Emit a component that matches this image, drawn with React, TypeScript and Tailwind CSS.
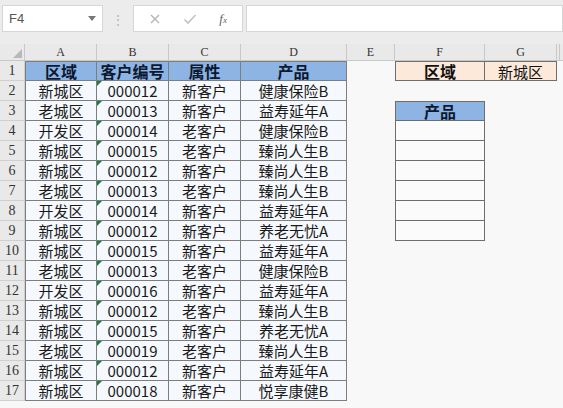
import React from 'react';

const rows: string[][] = [
  ['新城区', '000012', '新客户', '健康保险B'],
  ['老城区', '000013', '新客户', '益寿延年A'],
  ['开发区', '000014', '老客户', '健康保险B'],
  ['新城区', '000015', '老客户', '臻尚人生B'],
  ['新城区', '000012', '新客户', '臻尚人生B'],
  ['老城区', '000013', '老客户', '臻尚人生B'],
  ['开发区', '000014', '新客户', '益寿延年A'],
  ['新城区', '000012', '新客户', '养老无忧A'],
  ['新城区', '000015', '新客户', '益寿延年A'],
  ['老城区', '000013', '老客户', '健康保险B'],
  ['开发区', '000016', '新客户', '益寿延年A'],
  ['新城区', '000012', '老客户', '臻尚人生B'],
  ['新城区', '000015', '新客户', '养老无忧A'],
  ['老城区', '000019', '老客户', '臻尚人生B'],
  ['新城区', '000012', '新客户', '益寿延年A'],
  ['新城区', '000018', '新客户', '悦享康健B'],
];

const cols = [
  { key: 'A', w: 'w-[72px]' },
  { key: 'B', w: 'w-[72px]' },
  { key: 'C', w: 'w-[72px]' },
  { key: 'D', w: 'w-[106px]' },
  { key: 'E', w: 'w-[48px]' },
  { key: 'F', w: 'w-[90px]' },
  { key: 'G', w: 'w-[72px]' },
];

const cjk = { fontFamily: '"Noto Sans CJK SC", "Noto Sans", sans-serif' };
const serif = { fontFamily: '"Liberation Serif", "DejaVu Serif", serif' };

const GreenFlag = () => (
  <span className="absolute left-0 top-0 w-0 h-0 border-t-[5px] border-r-[5px] border-t-[#1f7a45] border-r-transparent" />
);

const App: React.FC = () => {
  return (
    <div className="w-[563px] h-[408px] overflow-hidden bg-[#f8f8f8] text-[#111]" style={cjk}>
      {/* formula bar */}
      <div className="h-[33px] bg-[#ececec] pt-[5px] flex">
        <div className="ml-[2px] w-[101px] h-[27px] bg-white border border-[#d6d6d6] flex items-center justify-between px-[6px]">
          <span className="text-[13px] text-[#555]" style={{ fontFamily: '"Liberation Sans", Arial, sans-serif' }}>F4</span>
          <span className="w-0 h-0 border-l-[4px] border-r-[4px] border-t-[5px] border-l-transparent border-r-transparent border-t-[#777]" />
        </div>
        <div className="w-[30px] flex items-center justify-center text-[#b0b0b0] text-[12px] leading-none">⋮</div>
        <div className="w-[110px] h-[27px] bg-white border border-[#d6d6d6] flex items-center justify-around px-[4px] text-[#b3b3b3]">
          <svg width="12" height="12" viewBox="0 0 12 12"><path d="M2 2L10 10M10 2L2 10" stroke="#b3b3b3" strokeWidth="1.3" /></svg>
          <svg width="14" height="12" viewBox="0 0 14 12"><path d="M1.5 6.5L5 10L12.5 2" stroke="#c2c2c2" strokeWidth="1.6" fill="none" /></svg>
          <span className="italic text-[13px] text-[#666]" style={serif}>f<span className="text-[9px]">x</span></span>
        </div>
        <div className="w-[3px]" />
        <div className="flex-1 h-[27px] bg-white border border-[#d6d6d6]" />
      </div>
      <div className="h-[11px] bg-[#ececec]" />

      {/* column headers */}
      <div className="flex h-[17px] bg-[#e9e9e9] border-b border-[#c8c8c8]">
        <div className="w-[25px] border-r border-[#c8c8c8] relative">
          <span className="absolute right-[2px] bottom-[2px] w-0 h-0 border-l-[9px] border-t-[9px] border-l-transparent border-t-transparent border-b-0 border-r-0" style={{ borderBottom: '9px solid #b8b8b8', borderLeft: '9px solid transparent', borderTop: 0 }} />
        </div>
        {cols.map(c => (
          <div key={c.key} className={`${c.w} box-border border-r border-[#c8c8c8] flex items-center justify-center text-[12px] text-[#333] leading-none`} style={serif}>
            {c.key}
          </div>
        ))}
        <div className="w-[3px] border-r border-[#c8c8c8]" />
      </div>

      {/* rows */}
      {Array.from({ length: 17 }).map((_, i) => {
        const r = i + 1;
        const data = r >= 2 ? rows[r - 2] : null;
        return (
          <div key={r} className="flex h-[20px]">
            <div className="w-[25px] box-border bg-[#e9e9e9] border-r border-b border-[#cfcfcf] flex items-center justify-center text-[14px] text-[#333] leading-none" style={serif}>
              {r}
            </div>
            {[0, 1, 2, 3].map(ci => (
              <div
                key={ci}
                className={`${cols[ci].w} box-border relative border-r border-b border-[#7d7d7d] flex items-center justify-center leading-none ${ci === 0 ? 'border-l' : ''} ${r === 1 ? 'border-t bg-[#8db4e2] font-bold text-[16px] text-[#0c1830]' : 'bg-[#f5f8fc] text-[15px] text-[#1a1a1a]'}`}
              >
                {r === 1 ? ['区域', '客户编号', '属性', '产品'][ci] : data![ci]}
                {r > 1 && ci === 1 && <GreenFlag />}
              </div>
            ))}
            <div className="w-[48px]" />
            {r === 1 ? (
              <>
                <div className="w-[90px] box-border border border-[#6e6e6e] bg-[#fde9d9] flex items-center justify-center font-bold text-[16px] leading-none">区域</div>
                <div className="w-[72px] box-border border-t border-r border-b border-[#6e6e6e] bg-[#fde9d9] flex items-center justify-center text-[15px] leading-none">新城区</div>
              </>
            ) : r === 3 ? (
              <div className="w-[90px] box-border border border-[#6e6e6e] bg-[#8db4e2] flex items-center justify-center font-bold text-[16px] text-[#0c1830] leading-none">产品</div>
            ) : r >= 4 && r <= 9 ? (
              <div className="w-[90px] box-border border-l border-r border-b border-[#6e6e6e] bg-[#fbfbfb]" />
            ) : null}
          </div>
        );
      })}
    </div>
  );
};

export default App;
